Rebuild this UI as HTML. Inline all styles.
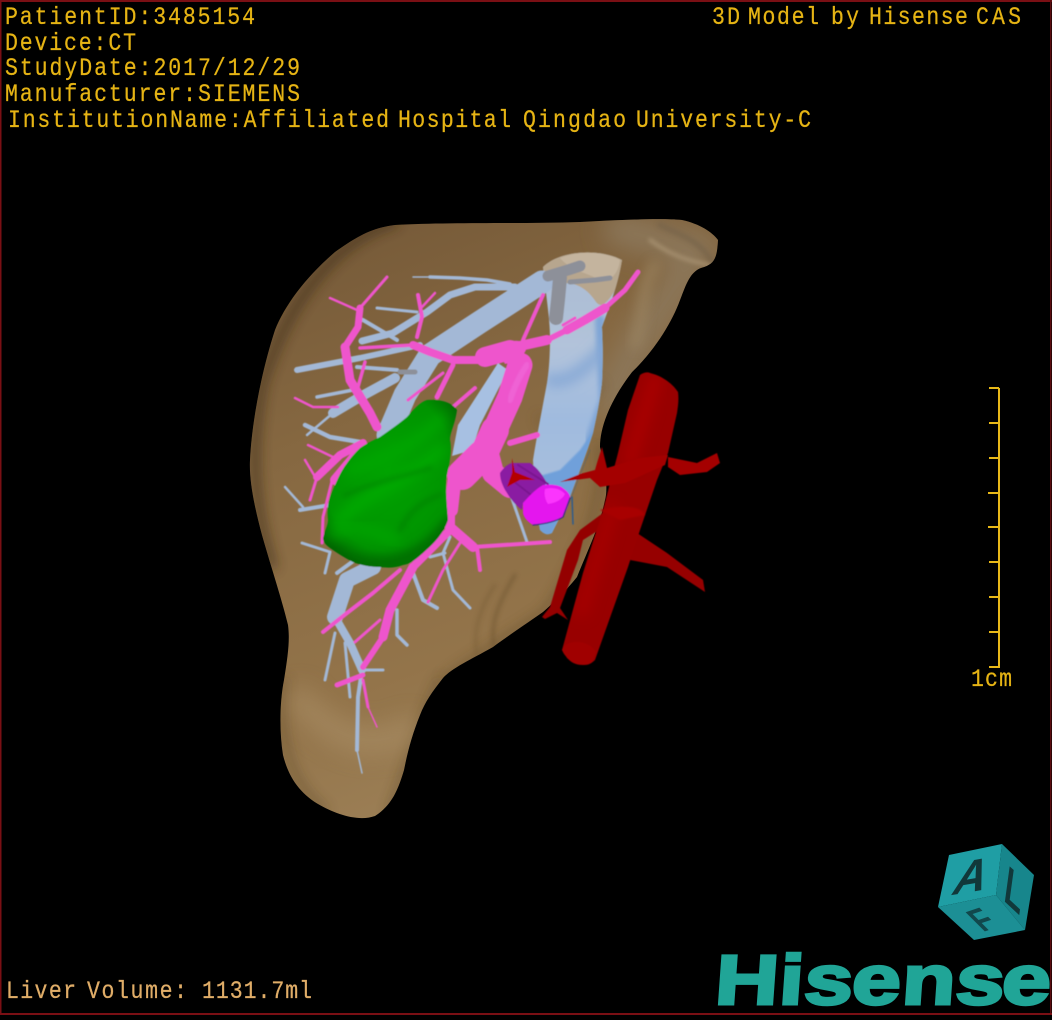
<!DOCTYPE html>
<html><head><meta charset="utf-8"><style>
html,body{margin:0;padding:0;background:#000;width:1052px;height:1020px;overflow:hidden}
svg{display:block}
.t{font-family:"Liberation Mono",monospace;font-size:25px;fill:#e6b414;stroke:#e6b414;stroke-width:.25}
.l{font-family:"Liberation Mono",monospace;font-size:25px;fill:#e0ad68;stroke:#e0ad68;stroke-width:.25}
path{stroke-linecap:round;stroke-linejoin:round}
g[stroke] path,path[stroke]{fill:none}
path.f{stroke:none}
</style></head><body>
<svg width="1052" height="1020" viewBox="0 0 1052 1020" xmlns="http://www.w3.org/2000/svg">
<defs>
<linearGradient id="lv" x1="0.3" y1="0" x2="0.6" y2="1"><stop offset="0" stop-color="#775b39"/><stop offset=".3" stop-color="#866841"/><stop offset=".7" stop-color="#93744a"/><stop offset="1" stop-color="#9e8259"/></linearGradient>
<linearGradient id="ivc" x1="0" y1="0" x2="0" y2="1"><stop offset="0" stop-color="#a8b9d0"/><stop offset=".35" stop-color="#b2c3da"/><stop offset=".6" stop-color="#a0bbdf"/><stop offset=".85" stop-color="#a9bfdc"/><stop offset="1" stop-color="#6fa0da"/></linearGradient>
<radialGradient id="gr" cx=".5" cy=".42" r=".62"><stop offset="0" stop-color="#00a200"/><stop offset=".72" stop-color="#009400"/><stop offset="1" stop-color="#006400"/></radialGradient>
<clipPath id="liv"><path d="M718 240C717 255 716 263 704 267C690 270 686 285 680 300C672 322 655 350 632 372C612 398 600 425 600 447C606 470 608 490 605 500C600 525 590 545 577 577C565 592 552 604 543 612C520 628 505 638 493 647C470 660 452 668 443 678C432 692 425 702 420 715C412 735 408 750 404 770C398 790 392 805 375 816C358 822 335 814 318 804C298 792 288 775 283 755C279 730 280 700 284 680C288 655 290 640 288 625C282 600 272 570 262 535C254 505 249 480 250 460C252 420 262 370 275 330C285 305 305 278 335 252C355 238 370 228 395 225C450 222 520 224 580 222C620 220 660 218 682 220C700 224 712 232 718 240Z"/></clipPath>
<clipPath id="ao"><path d="M562 650L583 573L603 510L618 453L628 410L640 375C644 372 648 372 650 373C662 376 672 383 678 392C679 400 678 406 677 413L668 453L657 480L640 530L628 567L595 660C590 665 587 665 583 665C575 665 570 662 567 657C564 655 563 652 562 650Z"/></clipPath>
<filter id="b2" x="-30%" y="-30%" width="160%" height="160%"><feGaussianBlur stdDeviation="2"/></filter>
<filter id="b6" x="-50%" y="-50%" width="200%" height="200%"><feGaussianBlur stdDeviation="6"/></filter>
<filter id="b12" x="-50%" y="-100%" width="200%" height="300%"><feGaussianBlur stdDeviation="12"/></filter>
<filter id="s"><feGaussianBlur stdDeviation=".45"/></filter>
<filter id="s1"><feGaussianBlur stdDeviation=".7"/></filter>
<clipPath id="gc"><path d="M427 400C440 399 452 402 457 410C455 425 450 432 450 440C452 450 450 462 446 480C446 495 447 505 448 520C443 535 432 545 423 553C415 560 410 564 403 565C395 568 388 568 380 567C370 567 360 565 353 562C345 558 337 553 330 548C326 545 323 542 323 538C325 530 328 525 328 520C327 510 328 503 330 497C335 485 340 472 347 463C352 456 356 452 360 448C367 443 374 440 380 437C390 430 400 423 407 417C413 410 420 402 427 400Z"/></clipPath>
<clipPath id="iv"><path d="M543 267C546 295 550 320 550 337C550 355 549 370 547 383C542 410 537 435 533 460L535 500L540 530C545 535 548 535 552 533L570 497C578 475 586 455 593 433C597 415 600 400 602 383C603 365 603 345 602 327C610 305 618 285 622 260C600 248 560 250 543 267Z"/></clipPath>
</defs>
<rect width="1052" height="1020" fill="#000"/>

<!-- liver -->
<path class="f" d="M718 240C717 255 716 263 704 267C690 270 686 285 680 300C672 322 655 350 632 372C612 398 600 425 600 447C606 470 608 490 605 500C600 525 590 545 577 577C565 592 552 604 543 612C520 628 505 638 493 647C470 660 452 668 443 678C432 692 425 702 420 715C412 735 408 750 404 770C398 790 392 805 375 816C358 822 335 814 318 804C298 792 288 775 283 755C279 730 280 700 284 680C288 655 290 640 288 625C282 600 272 570 262 535C254 505 249 480 250 460C252 420 262 370 275 330C285 305 305 278 335 252C355 238 370 228 395 225C450 222 520 224 580 222C620 220 660 218 682 220C700 224 712 232 718 240Z" fill="url(#lv)"/>
<g clip-path="url(#liv)">
<path d="M620 230L700 250L640 340L610 400" stroke="#8b7658" stroke-width="34" filter="url(#b12)"/>
<path d="M650 240C670 255 690 262 712 265" stroke="#ab9574" stroke-width="3" filter="url(#b2)"/>
<path d="M660 225C680 235 700 240 712 262" stroke="#75624a" stroke-width="6" filter="url(#b2)" opacity=".6"/>
<path d="M635 345C645 315 640 285 655 265" stroke="#a08a66" stroke-width="8" filter="url(#b6)" opacity=".8"/>
<path d="M395 222C340 238 290 295 262 385C250 450 254 510 272 565" stroke="#3a2a14" stroke-width="8" filter="url(#b6)" opacity=".75"/>
<path d="M284 680C278 730 285 780 325 810" stroke="#4c3a20" stroke-width="5" filter="url(#b6)" opacity=".6"/>
<path d="M440 680C420 720 410 760 390 812" stroke="#4a381e" stroke-width="5" filter="url(#b6)" opacity=".6"/>
<path d="M600 445C606 490 590 545 545 612C510 635 480 655 445 678" stroke="#5b4628" stroke-width="5" filter="url(#b6)" opacity=".7"/>
<path d="M495 650C488 625 500 600 515 575" stroke="#6f5632" stroke-width="3" filter="url(#b2)" opacity=".7"/>
<path d="M480 665C470 640 478 610 495 585" stroke="#7a5e38" stroke-width="2.5" filter="url(#b2)" opacity=".7"/>
<path d="M300 700C340 745 375 750 410 730" stroke="#ab9068" stroke-width="26" filter="url(#b12)" opacity=".6"/>
<path d="M540 418C545 430 570 420 600 385" stroke="#6e5432" stroke-width="6" filter="url(#b6)" opacity=".7"/>
</g>

<g filter="url(#s)">
<!-- IVC cylinder -->
<g clip-path="url(#iv)">
<rect x="520" y="240" width="120" height="300" fill="url(#ivc)"/>
<path d="M600 320L604 400L590 440" stroke="#7fa5d6" stroke-width="10" filter="url(#b2)"/>
<path d="M550 380C565 385 585 370 603 350" stroke="#86a8d6" stroke-width="12" filter="url(#b6)"/>
<path class="f" fill="#6fa0da" d="M597 425L570 500L550 535L535 530L533 478L560 470L580 450Z" filter="url(#s1)"/>
<path class="f" fill="#b7a68e" d="M540 262C560 246 600 246 625 258L618 285C610 300 602 310 596 302C585 285 570 280 555 285L543 290Z"/>
<path class="f" fill="#c9baa5" opacity=".7" d="M560 258C580 250 605 252 620 260C618 275 610 282 600 280C585 272 570 270 560 258Z"/>
</g>
<path d="M572 497L573 524" stroke="#2f5c8c" stroke-width="1.5"/>
<path d="M590 450L568 505" stroke="#2f5c8c" stroke-width="1" opacity=".4"/>

<g stroke="#a3b8d6">
<path d="M542 282L480 322L430 355" stroke-width="23"/>
<path d="M430 355L405 395L388 435" stroke-width="23"/>
<path d="M395 378L360 397L333 413" stroke-width="10"/>
<path d="M333 413L307 435" stroke-width="2.5"/>
<path d="M515 287L475 287L450 295L427 312L393 333L362 341" stroke-width="7"/>
<path d="M510 284L487 280L460 278L430 277" stroke-width="3.5"/>
<path d="M430 277L413 277" stroke-width="1.5"/>
<path d="M420 345L360 358L297 370" stroke-width="6"/>
<path d="M357 367L397 370" stroke-width="4"/>
<path d="M317 397L353 390" stroke-width="3.5"/>
<path d="M305 425L330 437L360 442" stroke-width="4.5"/>
<path d="M363 320L397 340" stroke-width="4"/>
<path d="M377 308L417 312" stroke-width="3"/>
<path d="M373 567L347 580L335 617" stroke-width="16"/>
<path d="M335 617L350 643L362 670" stroke-width="8"/>
<path d="M362 670L358 697L357 750" stroke-width="4"/>
<path d="M357 750L362 773" stroke-width="1.5"/>
<path d="M362 670L383 670" stroke-width="3"/>
<path d="M335 633L325 680" stroke-width="3"/>
<path d="M345 643L350 697" stroke-width="3"/>
<path d="M397 610L397 635L407 645" stroke-width="3.5"/>
<path d="M413 573L423 600L437 608" stroke-width="4"/>
<path d="M450 537L443 553L453 590L470 608" stroke-width="3"/>
<path d="M430 557L445 553" stroke-width="3"/>
<path d="M300 510L330 505" stroke-width="4"/>
<path d="M285 487L303 507" stroke-width="2.5"/>
<path d="M302 543L330 552L325 573" stroke-width="3"/>
<path d="M352 562L337 573" stroke-width="4"/>
<path d="M510 493L527 542" stroke-width="3"/>
</g>
<!-- mid vein -->
<path class="f" fill="#a7c0e2" d="M498 363L508 370L480 425L472 450L452 456L458 425Z"/>
<!-- grey hepatic junction -->
<g stroke="#8d9099">
<path d="M548 276L568 270L580 266" stroke-width="11"/>
<path d="M560 278L558 300L556 318" stroke-width="14"/>
<path d="M570 282L595 280L610 278" stroke-width="5"/>
<path d="M400 372L415 372" stroke-width="5"/>
</g>
<!-- pink -->
<g stroke="#ee55cc">
<path d="M638 272L625 290L605 308" stroke-width="5"/>
<path d="M605 308L585 320L567 330" stroke-width="9"/>
<path d="M567 330L547 340" stroke-width="6"/>
<path d="M547 340L520 346" stroke-width="10"/>
<path d="M510 350L485 357" stroke-width="20"/>
<path d="M480 360L453 360L430 352L413 345" stroke-width="8"/>
<path d="M413 345L360 348" stroke-width="3.5"/>
<path d="M543 295L523 340" stroke-width="4"/>
<path d="M520 365L510 397L495 430" stroke-width="25"/>
<path d="M495 430L482 458" stroke-width="28"/>
<path d="M482 455L462 475" stroke-width="30"/>
<path d="M455 475L451 510" stroke-width="14"/>
<path d="M450 510L450 530" stroke-width="10"/>
<path d="M450 530L413 567" stroke-width="8"/>
<path d="M413 567L390 610L383 637" stroke-width="9"/>
<path d="M383 637L363 667" stroke-width="6"/>
<path d="M487 450L493 473L510 487" stroke-width="22"/>
<path d="M510 443L537 435" stroke-width="6"/>
<path d="M450 527L473 547" stroke-width="10"/>
<path d="M473 547L550 542" stroke-width="4"/>
<path d="M477 547L480 570" stroke-width="4"/>
<path d="M400 570L373 593L347 613L323 632" stroke-width="4"/>
<path d="M380 620L355 642" stroke-width="3"/>
<path d="M337 685L363 675" stroke-width="5"/>
<path d="M363 680L368 707" stroke-width="3"/>
<path d="M368 707L377 727" stroke-width="1.5"/>
<path d="M460 543L443 570L428 602" stroke-width="3"/>
<path d="M387 277L360 308" stroke-width="3"/>
<path d="M360 308L358 327L345 347" stroke-width="7"/>
<path d="M345 347L350 380L370 413L377 427" stroke-width="9"/>
<path d="M330 298L357 310" stroke-width="2.5"/>
<path d="M418 295L422 317L417 337" stroke-width="4"/>
<path d="M435 293L422 307" stroke-width="2.5"/>
<path d="M453 365L437 397" stroke-width="5"/>
<path d="M443 373L408 400" stroke-width="3"/>
<path d="M475 388L453 407" stroke-width="4"/>
<path d="M295 398L313 407L338 407" stroke-width="2.5"/>
<path d="M365 362L358 387" stroke-width="3.5"/>
<path d="M363 443L340 455L317 477" stroke-width="8"/>
<path d="M317 477L310 500" stroke-width="3"/>
<path d="M308 445L335 458" stroke-width="2.5"/>
<path d="M305 460L317 480" stroke-width="2.5"/>
<path d="M333 477L323 517L322 543" stroke-width="3"/>
<path d="M360 450L335 480" stroke-width="10"/>
<path d="M563 325L575 318" stroke-width="3"/>
</g>
<path class="f" d="M498 352C505 340 518 338 527 344C527 355 517 362 505 364Z" fill="#ee55cc"/>
<path d="M510 400C515 385 520 375 527 365" stroke="#f070dc" stroke-width="6" opacity=".5" filter="url(#s1)"/>

<!-- green tumour -->
<g clip-path="url(#gc)">
<rect x="315" y="395" width="145" height="180" fill="url(#gr)"/>
<path d="M340 520C370 490 410 480 440 450" stroke="#00aa00" stroke-width="12" filter="url(#b6)"/>
<path d="M350 470C380 460 410 450 440 420" stroke="#00a800" stroke-width="10" filter="url(#b6)"/>
<path d="M345 495C380 480 410 475 430 468" stroke="#007e00" stroke-width="5" filter="url(#b2)" opacity=".45"/>
<path d="M400 530C410 510 425 500 440 495" stroke="#007e00" stroke-width="6" filter="url(#b2)" opacity=".45"/>
<path d="M325 545C360 572 410 572 450 522" stroke="#005a00" stroke-width="7" filter="url(#b6)"/>
<path d="M335 533C350 522 370 530 395 540" stroke="#00a800" stroke-width="8" filter="url(#b6)"/>
</g>

<!-- purple + magenta -->
<path class="f" fill="#8a1da2" d="M500 473C504 467 509 463 513 463L530 463C538 468 543 476 547 483L523 503L522 510C515 505 510 498 507 493C503 487 500 480 500 473Z"/>
<path d="M518 465L548 484M512 480L535 498" stroke="#7a1890" stroke-width="2"/>
<path class="f" fill="#e414ee" d="M523 503C530 495 536 489 543 485C552 484 560 485 563 488C567 491 570 494 570 497C569 505 566 512 563 517C555 522 544 524 533 525C528 522 524 518 523 513Z"/>
<path class="f" fill="#ff3cff" opacity=".85" d="M545 489C552 487 560 488 565 494C562 500 555 503 548 504C545 500 544 494 545 489Z"/>
<path d="M533 525C544 524 555 522 563 517L570 498" stroke="#2c2d80" stroke-width="1.3"/>
<path class="f" fill="#b40000" d="M512 458L515 472L535 480L520 480L507 487L512 473Z"/>

<!-- red -->
<path class="f" fill="#940000" d="M607 510L580 530L567 550L550 607L542 617L545 619L557 613L568 620L560 608L578 560L583 540L610 523Z"/>
<path class="f" fill="#960000" d="M637 533L667 553L703 580L705 592L667 567L630 560Z"/>
<path class="f" fill="#980000" d="M562 650L583 573L603 510L618 453L628 410L640 375C644 372 648 372 650 373C662 376 672 383 678 392C679 400 678 406 677 413L668 453L657 480L640 530L628 567L595 660C590 665 587 665 583 665C575 665 570 662 567 657C564 655 563 652 562 650Z"/>
<g clip-path="url(#ao)">
<path d="M655 380L630 460" stroke="#a80000" stroke-width="14" filter="url(#b6)"/>
<path d="M612 510L582 610" stroke="#a40000" stroke-width="14" filter="url(#b6)"/>
</g>
<path class="f" fill="#a00000" d="M562 650C566 638 590 640 596 652L592 662C585 666 575 666 567 658Z"/>
<path class="f" fill="#a40000" d="M668 455L640 458L607 468L602 447L597 463L595 470L580 474L560 482L590 478L600 487L625 483L665 465Z"/>
<path class="f" fill="#a40000" d="M668 457L697 463L717 453L720 463L707 472L680 475L668 467Z"/>
<path class="f" fill="#a80000" d="M600 510C620 505 640 505 645 515L620 520Z" filter="url(#s1)"/>
</g>

<!-- scale -->
<g fill="#e8b818">
<rect x="998" y="388" width="2" height="280"/>
<rect x="989" y="387" width="10" height="2"/><rect x="989" y="422" width="10" height="2"/><rect x="989" y="457" width="10" height="2"/><rect x="988" y="492" width="11" height="2"/><rect x="988" y="526" width="11" height="2"/><rect x="989" y="561" width="10" height="2"/><rect x="989" y="596" width="10" height="2"/><rect x="989" y="631" width="10" height="2"/><rect x="989" y="666" width="10" height="2"/>
</g>
<text class="t" transform="translate(971 686) scale(.86 1)" textLength="47.7" lengthAdjust="spacing">1cm</text>

<!-- header text -->
<text class="t" transform="translate(5 24) scale(.86 1)" textLength="290.7" lengthAdjust="spacing">PatientID:3485154</text>
<text class="t" transform="translate(5 50) scale(.86 1)" textLength="152.3" lengthAdjust="spacing">Device:CT</text>
<text class="t" transform="translate(5 75) scale(.86 1)" textLength="343" lengthAdjust="spacing">StudyDate:2017/12/29</text>
<text class="t" transform="translate(5 101) scale(.86 1)" textLength="343" lengthAdjust="spacing">Manufacturer:SIEMENS</text>
<text class="t" transform="translate(8 127) scale(.86 1)" textLength="443" lengthAdjust="spacing">InstitutionName:Affiliated</text>
<text class="t" transform="translate(398 127) scale(.86 1)" textLength="131.4" lengthAdjust="spacing">Hospital</text>
<text class="t" transform="translate(523 127) scale(.86 1)" textLength="119.8" lengthAdjust="spacing">Qingdao</text>
<text class="t" transform="translate(636 127) scale(.86 1)" textLength="203.5" lengthAdjust="spacing">University-C</text>
<text class="t" transform="translate(712 24) scale(.86 1)" textLength="32.6" lengthAdjust="spacing">3D</text>
<text class="t" transform="translate(748 24) scale(.86 1)" textLength="82.6" lengthAdjust="spacing">Model</text>
<text class="t" transform="translate(831 24) scale(.86 1)" textLength="32.6" lengthAdjust="spacing">by</text>
<text class="t" transform="translate(869 24) scale(.86 1)" textLength="115" lengthAdjust="spacing">Hisense</text>
<text class="t" transform="translate(976 24) scale(.86 1)" textLength="52.3" lengthAdjust="spacing">CAS</text>
<text class="l" transform="translate(6 998) scale(.86 1)" textLength="81.4" lengthAdjust="spacing">Liver</text>
<text class="l" transform="translate(87 998) scale(.86 1)" textLength="116.3" lengthAdjust="spacing">Volume:</text>
<text class="l" transform="translate(202 998) scale(.86 1)" textLength="127.9" lengthAdjust="spacing">1131.7ml</text>

<!-- cube -->
<path class="f" fill="#1f9ea4" d="M949 855L1002 844L996 895L938 907Z"/>
<path class="f" fill="#17868c" d="M1002 844L1034 875L1025 930L996 895Z"/>
<path class="f" fill="#1c8f95" d="M938 907L996 895L1025 930L974 940Z"/>
<text font-family="Liberation Sans,sans-serif" font-style="italic" font-weight="bold" font-size="50" fill="#11383a" transform="matrix(.9 -.15 -.17 .94 952 895)">A</text>
<text font-family="Liberation Sans,sans-serif" font-weight="bold" font-size="50" fill="#11383a" transform="matrix(.56 .52 -.14 1.03 1003 900)">L</text>
<text font-family="Liberation Sans,sans-serif" font-weight="bold" font-size="30" fill="#11484c" transform="matrix(.9 -.3 .93 .93 983 932)">F</text>

<!-- Hisense -->
<text x="-6.4 44.8 64.8 103 143 186 223" y="0" font-family="Liberation Sans,sans-serif" font-weight="bold" font-size="70" fill="#20a597" stroke="#20a597" stroke-width="3" transform="matrix(1.25 0 -.07 1 722 1004)">Hisense</text>

<!-- frame -->
<rect x="0" y="0" width="1052" height="2" fill="#7a0f14"/>
<rect x="0" y="0" width="1.5" height="1015" fill="#7a0f14"/>
<rect x="1050" y="0" width="1.5" height="1015" fill="#5c0c10"/>
<rect x="0" y="1013" width="1052" height="2" fill="#7a0f14"/>
</svg>
</body></html>
